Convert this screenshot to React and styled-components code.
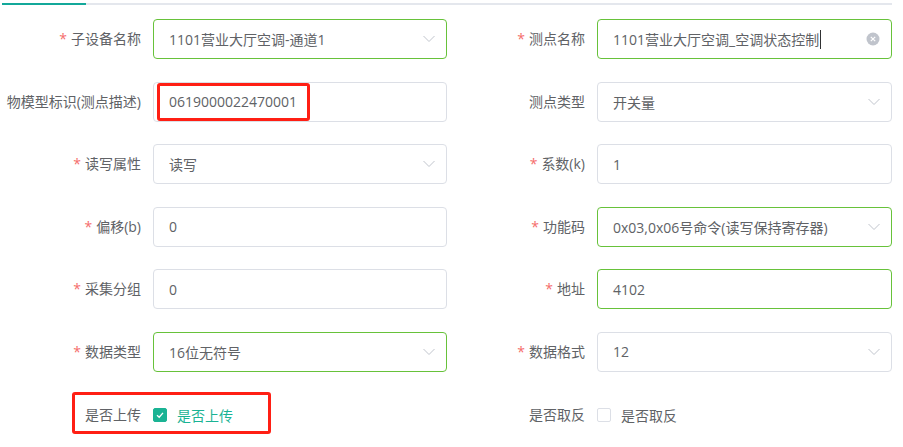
import React from "react";
import styled, { createGlobalStyle } from "styled-components";

const GlobalStyle = createGlobalStyle`
  body {
    margin: 0;
    background: #fff;
    font-family: "Open Sans", "Noto Sans CJK SC", sans-serif;
  }
`;

const fields = [
  [
    { label: "子设备名称", required: true, value: "1101营业大厅空调-通道1", kind: "select", active: true },
    { label: "测点名称", required: true, value: "1101营业大厅空调_空调状态控制", kind: "clear", active: true },
  ],
  [
    { label: "物模型标识(测点描述)", value: "0619000022470001", kind: "input" },
    { label: "测点类型", value: "开关量", kind: "select" },
  ],
  [
    { label: "读写属性", required: true, value: "读写", kind: "select" },
    { label: "系数(k)", required: true, value: "1", kind: "input" },
  ],
  [
    { label: "偏移(b)", required: true, value: "0", kind: "input" },
    { label: "功能码", required: true, value: "0x03,0x06号命令(读写保持寄存器)", kind: "select", active: true },
  ],
  [
    { label: "采集分组", required: true, value: "0", kind: "input" },
    { label: "地址", required: true, value: "4102", kind: "input", active: true },
  ],
  [
    { label: "数据类型", required: true, value: "16位无符号", kind: "select", active: true },
    { label: "数据格式", required: true, value: "12", kind: "select" },
  ],
  [
    { label: "是否上传", kind: "check", checked: true },
    { label: "是否取反", kind: "check", checked: false },
  ],
];

const Chevron = () => (
  <svg width="12" height="7" viewBox="0 0 12 7">
    <path d="M0.5 0.5 L6 6 L11.5 0.5" fill="none" stroke="#c0c4cc" strokeWidth="1" />
  </svg>
);

const ClearIcon = () => (
  <svg width="14" height="14" viewBox="0 0 14 14">
    <circle cx="7" cy="7" r="6.5" fill="#c0c4cc" />
    <path d="M4.8 4.8 L9.2 9.2 M9.2 4.8 L4.8 9.2" stroke="#fff" strokeWidth="1.2" />
  </svg>
);

const CheckMark = () => (
  <svg width="10" height="10" viewBox="0 0 10 10">
    <path d="M2 5.2 L4.2 7.2 L8 2.8" fill="none" stroke="#fff" strokeWidth="1.3" />
  </svg>
);

const Field = ({ label, required, value, kind, active, checked, labelWidth }) => (
  <FormItem>
    <Label $width={labelWidth}>
      {required && <Star>*</Star>}
      {label}
    </Label>
    {kind === "check" ? (
      <CheckWrap>
        <Box $checked={checked}>{checked && <CheckMark />}</Box>
        <CheckText $checked={checked}>{label}</CheckText>
      </CheckWrap>
    ) : (
      <Input $active={active}>
        <Value>
          {value}
          {kind === "clear" && <Caret />}
        </Value>
        {kind === "select" && <Suffix><Chevron /></Suffix>}
        {kind === "clear" && <Suffix $right={11}><ClearIcon /></Suffix>}
      </Input>
    )}
  </FormItem>
);

const App = () => (
  <Page>
    <GlobalStyle />
    <Tabs>
      <ActiveBar />
    </Tabs>
    <Form>
      {fields.map((row, i) => (
        <React.Fragment key={i}>
          <Field {...row[0]} labelWidth={153} />
          <Field {...row[1]} labelWidth={150} />
        </React.Fragment>
      ))}
    </Form>
    <Mark $left={157} $top={83} $w={153} $h={38} />
    <Mark $left={72} $top={392} $w={199} $h={42} />
  </Page>
);

const Page = styled.div`
  position: relative;
  width: 903px;
  height: 447px;
  overflow: hidden;
`;

const Tabs = styled.div`
  margin: 3px 11px 0 2px;
  height: 2px;
  background: #e4e7ed;
`;

const ActiveBar = styled.div`
  width: 84px;
  height: 2px;
  background: #13a89a;
`;

const Form = styled.div`
  display: grid;
  grid-template-columns: 447px 445px;
  grid-auto-rows: 40px;
  row-gap: 22.6px;
  padding-top: 14px;
`;

const FormItem = styled.div`
  display: flex;
  align-items: center;
  height: 40px;
`;

const Label = styled.label`
  flex: none;
  width: ${(p) => p.$width}px;
  box-sizing: border-box;
  padding-right: 12px;
  text-align: right;
  font-size: 14px;
  line-height: 40px;
  color: #606266;
  white-space: nowrap;
`;

const Star = styled.span`
  color: #f56c6c;
  margin-right: 4px;
`;

const Input = styled.div`
  position: relative;
  flex: 1;
  height: 40px;
  box-sizing: border-box;
  border: 1px solid ${(p) => (p.$active ? "#67c23a" : "#dcdfe6")};
  border-radius: 4px;
  padding: 0 15px;
  display: flex;
  align-items: center;
`;

const Value = styled.span`
  font-size: 14px;
  color: #606266;
  white-space: nowrap;
  display: flex;
  align-items: center;
`;

const Caret = styled.span`
  display: inline-block;
  width: 1px;
  height: 19px;
  background: #303133;
  margin-left: 1px;
`;

const Suffix = styled.span`
  position: absolute;
  right: ${(p) => p.$right ?? 11}px;
  top: 50%;
  transform: translateY(-50%);
  display: flex;
`;

const CheckWrap = styled.div`
  display: flex;
  align-items: center;
`;

const Box = styled.span`
  width: 14px;
  height: 14px;
  box-sizing: border-box;
  border-radius: 2px;
  border: 1px solid ${(p) => (p.$checked ? "#1ab394" : "#dcdfe6")};
  background: ${(p) => (p.$checked ? "#1ab394" : "#fff")};
  display: flex;
  align-items: center;
  justify-content: center;
`;

const CheckText = styled.span`
  margin-left: 10px;
  font-size: 14px;
  color: ${(p) => (p.$checked ? "#1ab394" : "#606266")};
`;

const Mark = styled.div`
  position: absolute;
  left: ${(p) => p.$left}px;
  top: ${(p) => p.$top}px;
  width: ${(p) => p.$w}px;
  height: ${(p) => p.$h}px;
  box-sizing: border-box;
  border: 3px solid #ff1f14;
  border-radius: 3px;
  pointer-events: none;
`;

export default App;
